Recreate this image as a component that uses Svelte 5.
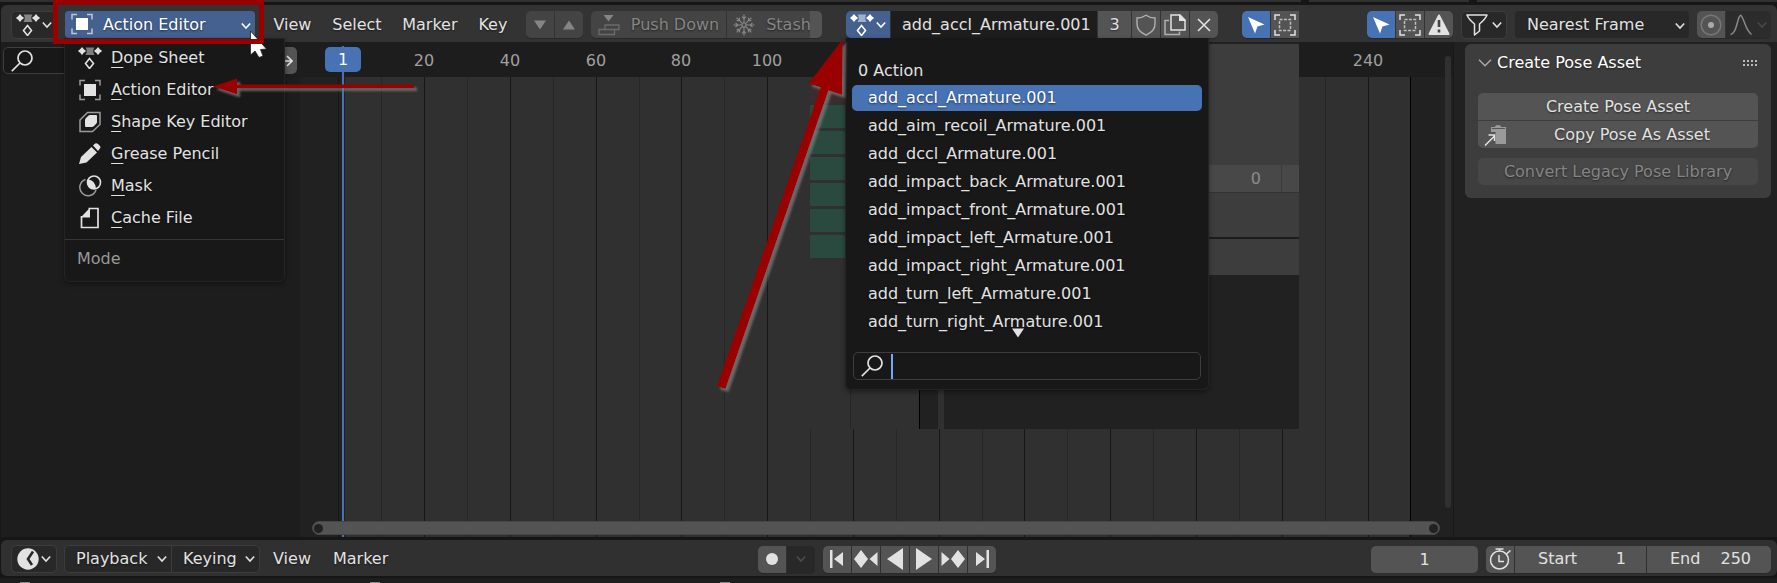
<script>
  const modes = [
    { icon: 'dope', label: 'Dope Sheet' },
    { icon: 'action', label: 'Action Editor' },
    { icon: 'shape', label: 'Shape Key Editor' },
    { icon: 'pencil', label: 'Grease Pencil' },
    { icon: 'mask', label: 'Mask' },
    { icon: 'file', label: 'Cache File' }
  ];
  const actions = [
    'add_accl_Armature.001',
    'add_aim_recoil_Armature.001',
    'add_dccl_Armature.001',
    'add_impact_back_Armature.001',
    'add_impact_front_Armature.001',
    'add_impact_left_Armature.001',
    'add_impact_right_Armature.001',
    'add_turn_left_Armature.001',
    'add_turn_right_Armature.001'
  ];
  const transport = [
    ['first', 'Jump to start'],
    ['prevkey', 'Previous keyframe'],
    ['back', 'Play reversed'],
    ['play', 'Play'],
    ['nextkey', 'Next keyframe'],
    ['last', 'Jump to end']
  ];
  // Horizontal place of a frame inside the canvas, in pixels.
  const frameX = (f) => Math.round(38.4 + f * 4.288);
  const ticks = Array.from({ length: 25 }, (_, i) => (i + 1) * 10);
  // Frames 120 to 220 lie behind the action list.
  const labels = ticks.filter((f) => f % 20 === 0 && (f <= 100 || f > 220));
  let selected = $state(0);
</script>

{#snippet icon(name)}
  {#if name === 'dope'}
    <svg width="24" height="22" viewBox="0 0 24 22" fill="currentColor">
      <path d="M7.5 .5h9q-2.500 3.500 0 7.500h-9q2.500-4 0-7.500z" opacity=".5" />
      <path d="M4 1q1 2 3 3-2 1-3 3-1-2-3-3 2-1 3-3z" stroke="currentColor" stroke-width="1.500" stroke-linejoin="round" />
      <path d="M20 1q1 2 3 3-2 1-3 3-1-2-3-3 2-1 3-3z" stroke="currentColor" stroke-width="1.500" stroke-linejoin="round" />
      <path d="M11.500 11.500l4 5-4 5-4-5z" fill="none" stroke="currentColor" stroke-width="1.600" />
    </svg>
  {:else if name === 'action'}
    <svg width="24" height="22" viewBox="0 0 24 22">
      <path d="M7 1.500H2V6.500M17 1.500h5V6.500M7 20.500H2V15.500M17 20.500h5V15.500" fill="none" stroke="currentColor" stroke-width="1.500" opacity=".65" />
      <path d="M6 5h12v12H6z" fill="currentColor" />
    </svg>
  {:else if name === 'shape'}
    <svg width="24" height="22" viewBox="0 0 24 22">
      <path d="M2 9l7.500-7.500H22v12L14.500 20.500H2z" fill="none" stroke="currentColor" stroke-width="1.500" opacity=".65" />
      <path d="M7 9q0-1 1-2l2-2q1-1 2-1h6q1 0 1 1v6q0 1-1 2l-2 2q-1 1-2 1H8q-1 0-1-1z" fill="currentColor" />
    </svg>
  {:else if name === 'pencil'}
    <svg width="24" height="22" viewBox="0 0 24 22" fill="currentColor">
      <path d="M1 21l2-7L13.500 4l5.500 5.500L8.500 19.500z" />
      <path d="M15 2.500l1.500-1.500q1.500-1.500 3.500 0l2 2q1 1.500-.5 3L20 8z" />
    </svg>
  {:else if name === 'mask'}
    <svg width="24" height="22" viewBox="0 0 24 22">
      <path d="M7.500 4.500A8.300 8.300 0 1 0 18 15" fill="none" stroke="currentColor" stroke-width="1.500" opacity=".65" />
      <circle cx="16" cy="7.500" r="6.500" fill="none" stroke="currentColor" stroke-width="1.600" />
      <path d="M10 4.500q7 .5 8 9-4 1.500-6.500-1T10 4.500z" fill="currentColor" />
    </svg>
  {:else if name === 'file'}
    <svg width="24" height="22" viewBox="0 0 24 22">
      <path d="M3.500 9v11.500h16.500V1.500H10.500" fill="none" stroke="currentColor" stroke-width="1.700" />
      <path d="M2.700 10.500L12 .7v9.800z" fill="currentColor" />
    </svg>
  {:else if name === 'chevron'}
    <svg width="10" height="8" viewBox="0 0 10 8" fill="none" stroke="currentColor" stroke-width="1.600"><path d="M.8 1.500L5 6l4.200-4.500" /></svg>
  {:else if name === 'search'}
    <svg width="22" height="22" viewBox="0 0 22 22" fill="none" stroke="currentColor" stroke-width="1.700"><circle cx="14" cy="8" r="7" /><path d="M9 13L.8 21.200" /></svg>
  {:else if name === 'down'}
    <svg width="12" height="10" viewBox="0 0 12 10" fill="currentColor"><path d="M0 .5h12L6 9.500z" /></svg>
  {:else if name === 'up'}
    <svg width="12" height="10" viewBox="0 0 12 10" fill="currentColor"><path d="M0 9.500h12L6 .5z" /></svg>
  {:else if name === 'push'}
    <svg width="22" height="22" viewBox="0 0 22 22" fill="none" stroke="currentColor" stroke-width="1.300">
      <path d="M5.500 1h10l-5 6.500z" fill="currentColor" stroke="none" />
      <path d="M7 11h14v4.500H7zM1 15.500h15.500v5H1z" opacity=".6" />
    </svg>
  {:else if name === 'snow'}
    <svg width="22" height="22" viewBox="0 0 22 22" fill="none" stroke="currentColor" stroke-width="1.200">
      {#each [0, 45, 90, 135, 180, 225, 270, 315] as a}
        <path d="M11 9V.5M9 2.500L11 5l2-2.500" transform="rotate({a} 11 11)" />
      {/each}
      <circle cx="11" cy="11" r="2" />
    </svg>
  {:else if name === 'shield'}
    <svg width="22" height="22" viewBox="0 0 22 22" fill="none" stroke="currentColor" stroke-width="1.400" opacity=".65"><path d="M11 1.200q4 2.800 9 2.800v6q0 7-9 11.200Q2 17 2 10V4q5 0 9-2.800z" /></svg>
  {:else if name === 'copy'}
    <svg width="22" height="22" viewBox="0 0 22 22" fill="none" stroke="currentColor" stroke-width="1.500">
      <path d="M5 6.500H1v14h14.500v-3" opacity=".65" />
      <path d="M7 1h9l5 5v10H7z" /><path d="M15 0l7 7h-7z" fill="currentColor" stroke="none" />
    </svg>
  {:else if name === 'close'}
    <svg width="14" height="14" viewBox="0 0 14 14" fill="none" stroke="currentColor" stroke-width="1.600"><path d="M1 1l12 12M13 1L1 13" /></svg>
  {:else if name === 'pointer'}
    <svg width="18" height="18" viewBox="0 0 18 18" fill="currentColor"><path d="M1 1l16.500 7.500-7 2-2.500 7z" /></svg>
  {:else if name === 'select'}
    <svg width="22" height="22" viewBox="0 0 22 22" fill="none" stroke="currentColor" stroke-width="1.500">
      <path d="M6 1H1v5M16 1h5v5M6 21H1v-5M16 21h5v-5" />
      <path d="M5.500 5.500h11v11h-11z" stroke-dasharray="3 1.400" opacity=".75" />
    </svg>
  {:else if name === 'warn'}
    <svg width="22" height="22" viewBox="0 0 22 22"><path d="M11 1.500l9.500 18.500h-19z" fill="currentColor" stroke="currentColor" stroke-width="2" stroke-linejoin="round" /><path d="M11 6v7M11 15.500v3" stroke="#444" stroke-width="2.600" /></svg>
  {:else if name === 'filter'}
    <svg width="22" height="22" viewBox="0 0 22 22" fill="none" stroke="currentColor" stroke-width="1.500" stroke-linejoin="round"><path d="M1 1h20q-1.500 4-7.500 9v7L8.500 21V10Q2.500 5 1 1z" /></svg>
  {:else if name === 'prop'}
    <svg width="22" height="22" viewBox="0 0 22 22"><circle cx="11" cy="11" r="9.800" fill="none" stroke="#777" stroke-width="1.500" /><circle cx="11" cy="11" r="3" fill="#aaa" /></svg>
  {:else if name === 'falloff'}
    <svg width="22" height="22" viewBox="0 0 22 22" fill="none" stroke="currentColor" stroke-width="1.500"><path d="M.5 20.500Q4.500 20 7 10T11 1.500 15 10t6.500 10.500" /></svg>
  {:else if name === 'asset'}
    <svg width="22" height="22" viewBox="0 0 22 22"><path d="M7 3h4q0-2 3-2t3 2h5v17H11.500V8H7z" fill="#9a9a9a" /><path d="M8 4.500h13" stroke="#555" /><path d="M1 21.500l9-9M4.500 11H10.500v6" fill="none" stroke="currentColor" stroke-width="1.500" /></svg>
  {:else if name === 'clock'}
    <svg width="22" height="22" viewBox="0 0 22 22"><circle cx="11" cy="11" r="10.700" fill="currentColor" /><path d="M16 3.500L11 11l4 6" fill="none" stroke="#282828" stroke-width="2.600" /></svg>
  {:else if name === 'watch'}
    <svg width="22" height="22" viewBox="0 0 22 22" fill="none" stroke="currentColor" stroke-width="1.500"><circle cx="10.500" cy="12" r="9" /><path d="M10 7v6.500h5M6.500 1h8M10.500 1v2M17.500 6l4-3.500" /></svg>
  {:else if name === 'dot'}
    <svg width="14" height="14" viewBox="0 0 14 14"><circle cx="7" cy="7" r="6" fill="currentColor" /></svg>
  {:else if name === 'expand'}
    <svg width="20" height="12" viewBox="0 0 20 12" fill="none" stroke="currentColor" stroke-width="1.600"><path d="M1 6h18M6 1L1 6l5 5M14 1l5 5-5 5" /></svg>
  {:else}
    <svg width="24" height="22" viewBox="0 0 24 22" fill="currentColor">
      {#if name === 'first'}<path d="M5 2h2.500v18H5zM18 4v14l-9-7z" />
      {:else if name === 'prevkey'}<path d="M0 11l7-9 7 9-7 9zM23.500 4v14l-8-7z" />
      {:else if name === 'back'}<path d="M20 0v22L4 11z" />
      {:else if name === 'play'}<path d="M4 0v22l16-11z" />
      {:else if name === 'nextkey'}<path d="M.5 4v14l8-7zM10 11l7-9 7 9-7 9z" />
      {:else}<path d="M16.500 2H19v18h-2.500zM6 4v14l9-7z" />{/if}
    </svg>
  {/if}
{/snippet}

<div class="app">
  <div class="area-above"><span></span><span></span></div>

  <header class="bar">
    <button class="box editor" aria-label="Editor type">{@render icon('dope')}{@render icon('chevron')}</button>
    <div class="mode">
      <span class="lead">{@render icon('action')}</span>
      <select aria-label="Mode"><option>Action Editor</option></select>
      <span class="tail">{@render icon('chevron')}</span>
    </div>
    <nav class="menus wide">
      <button>View</button><button>Select</button><button>Marker</button><button>Key</button>
    </nav>
    <div class="group off">
      <button class="sq" disabled aria-label="Move down">{@render icon('down')}</button>
      <button class="sq" disabled aria-label="Move up">{@render icon('up')}</button>
    </div>
    <div class="group off">
      <button class="push" disabled>{@render icon('push')}Push Down</button>
      <button class="stash" disabled>{@render icon('snow')}Stash</button>
      <span class="stub"></span>
    </div>
    <div class="group datablock">
      <button class="browse" aria-label="Browse action">{@render icon('dope')}{@render icon('chevron')}</button>
      <input class="name" aria-label="Action name" value="add_accl_Armature.001" />
      <button class="users">3</button>
      <button class="sq" aria-label="Fake user">{@render icon('shield')}</button>
      <button class="sq" aria-label="New action">{@render icon('copy')}</button>
      <button class="sq" aria-label="Unlink">{@render icon('close')}</button>
    </div>
    <div class="group cut">
      <button class="sq on" aria-label="Only selected">{@render icon('pointer')}</button>
      <button class="sq" aria-label="Show hidden">{@render icon('select')}</button>
    </div>
    <div class="right">
      <div class="group">
        <button class="sq on" aria-label="Only show selected">{@render icon('pointer')}</button>
        <button class="sq" aria-label="Include hidden">{@render icon('select')}</button>
        <button class="sq" aria-label="Only errors">{@render icon('warn')}</button>
      </div>
      <button class="box filter" aria-label="Filters">{@render icon('filter')}{@render icon('chevron')}</button>
      <div class="snap">
        <select aria-label="Snap"><option>Nearest Frame</option></select>
        <span class="tail">{@render icon('chevron')}</span>
      </div>
      <div class="group">
        <button class="sq" aria-label="Proportional editing">{@render icon('prop')}</button>
        <button class="falloff" aria-label="Falloff">{@render icon('falloff')}{@render icon('chevron')}</button>
      </div>
    </div>
  </header>

  <main>
    <aside class="channels">
      <div class="find">
        <label class="search">{@render icon('search')}<input aria-label="Filter channels" /></label>
        <button class="swap" aria-label="Invert">{@render icon('expand')}</button>
      </div>
    </aside>

    <section class="canvas">
      <div class="ruler">
        {#each labels as f}<span style="left:{frameX(f)}px">{f}</span>{/each}
      </div>
      <div class="graph">
        <div class="range" style="left:{frameX(1) + 2}px;width:{frameX(250) - frameX(1) - 2}px"></div>
        <i class="tick" style="left:{frameX(0)}px"></i>
        {#each ticks as f}
          <i class="tick" class:minor={f % 20 !== 0} class:end={f === 250} style="left:{frameX(f)}px"></i>
        {/each}
      </div>
      <div class="ghost">
        <div class="g-keys">
          <div class="g-ruler"></div>
          <div class="g-rows"><b class="red"></b><b></b><b></b><b></b><b></b><b></b><b></b></div>
          <i></i>
        </div>
        <div class="g-gap"></div>
        <div class="g-panel">
          <div class="g-top"></div>
          <div class="g-num"><span>0</span><em></em></div>
          <div class="g-a"></div>
          <div class="g-b"></div>
        </div>
      </div>
      <div class="playhead" style="left:{frameX(1)}px"><span>1</span></div>
      <div class="vscroll"></div>
      <div class="hscroll"><i></i><i></i></div>
    </section>

    <aside class="sidebar">
      <div class="panel">
        <h2>
          <svg width="14" height="8" viewBox="0 0 14 8" fill="none" stroke="currentColor" stroke-width="1.500"><path d="M1 .8l6 6 6-6" /></svg>
          Create Pose Asset
          <span class="grip"></span>
        </h2>
        <div class="stack">
          <button>Create Pose Asset</button>
          <button class="withicon">{@render icon('asset')}<span>Copy Pose As Asset</span></button>
        </div>
        <button class="legacy" disabled>Convert Legacy Pose Library</button>
      </div>
    </aside>
  </main>

  <footer class="bar timeline">
    <button class="box editor" aria-label="Timeline editor">{@render icon('clock')}{@render icon('chevron')}</button>
    <div class="boxes">
      <button class="playback">Playback{@render icon('chevron')}</button>
      <button class="keying">Keying{@render icon('chevron')}</button>
    </div>
    <nav class="menus"><button>View</button><button>Marker</button></nav>
    <div class="center">
      <div class="group">
        <button class="sq" aria-label="Auto keying">{@render icon('dot')}</button>
        <button class="sq dim" aria-label="Keying options">{@render icon('chevron')}</button>
      </div>
      <div class="group">
        {#each transport as [name, label]}
          <button class="sq" aria-label={label}>{@render icon(name)}</button>
        {/each}
      </div>
    </div>
    <div class="right">
      <input class="current" aria-label="Current frame" value="1" />
      <div class="group">
        <button class="sq" aria-label="Use preview range">{@render icon('watch')}</button>
        <label class="num start">Start<input value="1" /></label>
        <label class="num stop">End<input value="250" /></label>
      </div>
    </div>
  </footer>
  <div class="status"><i></i><i></i><i></i></div>

  <div class="popup modes">
    {#each modes as m}
      <button>{@render icon(m.icon)}<span><u>{m.label[0]}</u>{m.label.slice(1)}</span></button>
    {/each}
    <p>Mode</p>
  </div>

  <div class="popup actions">
    <p>0 Action</p>
    {#each actions as a, i}
      <button class:sel={i === selected} onclick={() => (selected = i)}>{a}</button>
    {/each}
    <span class="more">{@render icon('down')}</span>
    <label class="search">{@render icon('search')}<i class="caret"></i><input aria-label="Search actions" /></label>
  </div>

  <svg class="notes" width="900" height="400" viewBox="0 0 900 400">
    <defs>
      <filter id="soft" x="-20%" y="-20%" width="140%" height="140%">
        <feDropShadow dx="3" dy="3" stdDeviation="1.200" flood-color="#7c7c7c" flood-opacity=".75" />
      </filter>
    </defs>
    <path d="M250.500 31v24l4.500-4 4 6.500 4-1.500-2.500-6.500 6-.5z" fill="#fff" stroke="#222" stroke-width=".8" />
    <path d="M55.500 2.500h206v39h-206z" fill="none" stroke="#900" stroke-width="5" />
    <path d="M213 86.500l24-8v6h177v3.500H237v6.500z" fill="#900" filter="url(#soft)" />
    <path d="M843 39l-1 56-13.500-4.500L725.500 389l-8.500-2.500L820.500 87.500 808.500 83.500z" fill="#900" filter="url(#soft)" />
  </svg>
</div>

<style>
  :global(body) { background: #161616; overflow: hidden; }
  .app, .app * { box-sizing: border-box; }
  .app {
    position: relative; display: flex; flex-direction: column; min-height: 100vh;
    font: 16px/20px "DejaVu Sans", sans-serif; color: #e2e2e2; background: #161616;
  }
  svg { display: block; flex: none; }
  button, input, select { font: inherit; color: inherit; border: 0; margin: 0; padding: 0; background: none; outline: none; min-width: 0; }
  button { display: flex; align-items: center; justify-content: center; white-space: nowrap; text-shadow: 0 1px 2px #0008; }
  select { appearance: none; width: 100%; height: 100%; text-shadow: 0 1px 2px #0008; }
  h2, p { margin: 0; font: inherit; }

  .area-above { height: 2px; margin-bottom: 3px; background: #303030; display: flex; justify-content: flex-end; gap: 160px; padding-right: 300px; }
  .area-above span { width: 8px; background: #161616; }
  .bar { display: flex; align-items: center; height: 37px; padding: 2px 6px 0 10px; margin-left: 1px; background: #333; border-radius: 6px 6px 0 0; gap: 8px; }
  .box, .boxes { height: 28px; border: 1px solid #3d3d3d; border-radius: 5px; background: #282828; flex: none; }
  .editor { width: 46px; gap: 2px; }
  .filter { width: 46px; gap: 4px; }
  .mode, .snap { position: relative; height: 27px; border-radius: 4px; flex: none; }
  .mode { width: 190px; background: #44618f; color: #fff; }
  .mode select { padding-left: 38px; }
  .lead { position: absolute; left: 5px; top: 2px; }
  .tail { position: absolute; right: 4px; top: 11px; pointer-events: none; }
  .snap { width: 174px; background: #282828; }
  .snap select { padding-left: 12px; }
  .menus { display: flex; height: 27px; }
  .menus.wide { width: 255px; }
  .menus button { padding: 0 11px; }
  .group { display: flex; gap: 1px; height: 27px; border-radius: 5px; overflow: hidden; flex: none; box-shadow: 0 1px 0 #282828; }
  .group button { background: #545454; }
  .group .sq { width: 28px; }
  .group .on { background: #4772b3; color: #fff; }
  .off button { background: #444; color: #858585; }
  .group .push { width: 135px; gap: 11px; }
  .group .stash { width: 83px; gap: 11px; padding-left: 7px; }
  .stub { width: 12px; margin-left: -1px; background: #545454; }
  .datablock { margin: 0 16px; }
  .group .browse { width: 44px; gap: 2px; background: #44618f; color: #fff; }
  .name { width: 206px; padding-left: 11px; background: #1d1d1d; }
  .group .users { width: 33px; }
  .cut { border-radius: 5px 0 0 5px; }
  .right { display: flex; gap: 8px; margin-left: auto; align-items: center; }
  .group .falloff { width: 45px; gap: 5px; background: #2c2c2c; color: #888; }
  .falloff :global(svg:last-child) { opacity: .3; }

  main { display: flex; flex: 1; margin-left: 1px; background: #212121; }
  .channels { width: 299px; flex: none; background: #1d1d1d; padding: 5px 3px 0 2px; border-radius: 0 0 0 5px; }
  .find { display: flex; gap: 8px; }
  .search { display: flex; align-items: center; gap: 8px; flex: 1; height: 27px; padding-left: 7px; border: 1px solid #3d3d3d; border-radius: 5px; background: #181818; }
  .search input { flex: 1; }
  .swap { width: 28px; height: 27px; border-radius: 5px; background: #545454; }
  .canvas { position: relative; display: flex; flex-direction: column; flex: 1; overflow: hidden; border-right: 1px solid #181818; }
  .ruler { position: relative; height: 35px; background: #1d1d1d; color: #a0a0a0; }
  .ruler span { position: absolute; top: 9px; transform: translateX(-50%); }
  .graph { position: relative; flex: 1; }
  .range { position: absolute; top: 0; bottom: 0; background: #303030; }
  .tick { position: absolute; top: 0; bottom: 0; width: 1px; background: #161616; }
  .minor { background: #262626; }
  .end { background: #000; }
  .playhead { position: absolute; top: 4px; bottom: 0; width: 2px; background: #4772b3; margin-left: -1px; box-shadow: 0 0 0 1px #2228; }
  .playhead span { position: absolute; top: 1px; left: -17px; width: 36px; height: 25px; line-height: 26px; text-align: center; border-radius: 5px; background: #4772b3; color: #fff; }
  .vscroll { position: absolute; right: 2px; top: 14px; bottom: 29px; width: 6px; border-radius: 3px; background: #303030; }
  .hscroll { position: absolute; left: 12px; right: 13px; bottom: 2px; height: 14px; border-radius: 7px; background: #545454; border: 1px solid #464646; display: flex; justify-content: space-between; align-items: center; padding: 0 1px; }
  .hscroll i { width: 9px; height: 9px; border-radius: 50%; background: #212121; }

  .ghost { position: absolute; left: 510px; top: 0; width: 489px; height: 387px; display: flex; background: #212121; }
  .g-keys { position: relative; width: 110px; background: #303030; border-right: 1px solid #000; }
  .g-keys > i { position: absolute; left: 40px; bottom: 0; width: 1px; height: 180px; background: #262626; }
  .g-ruler { height: 35px; background: #1d1d1d; margin-bottom: 11px; }
  .g-rows { display: flex; flex-direction: column; gap: 3px; }
  .g-rows b { height: 23px; background: #2a4a40; }
  .g-rows .red { height: 14px; background: #3c2c2d; }
  .g-gap { width: 6px; margin: 0 18px; background: #303030; }
  .g-panel { flex: 1; padding-top: 2px; }
  .g-top { height: 121px; background: #3d3d3d; }
  .g-num { display: flex; justify-content: flex-end; height: 28px; background: #484848; border-bottom: 1px solid #333; line-height: 27px; color: #8c8c8c; }
  .g-num em { width: 18px; margin-left: 20px; border-left: 1px solid #3a3a3a; }
  .g-a { height: 44px; background: #3d3d3d; border-top: 1px solid #3d3d3d; }
  .g-b { height: 38px; background: #3d3d3d; border-top: 2px solid #1d1d1d; }

  .sidebar { width: 323px; flex: none; padding: 2px 6px 0 11px; }
  .panel { padding: 9px 13px 13px; border-radius: 6px; background: #3d3d3d; }
  h2 { display: flex; align-items: center; height: 20px; gap: 5px; color: #fff; margin-bottom: 20px; text-shadow: 0 1px 2px #0008; }
  h2 svg { color: #aaa; }
  .grip { width: 16px; height: 8px; margin-left: auto; background: radial-gradient(circle, #bbb 1px, transparent 1px) 0 0 / 4px 4px; }
  .stack { display: flex; flex-direction: column; gap: 1px; border-radius: 5px; overflow: hidden; margin-bottom: 10px; }
  .stack button { height: 27px; background: #545454; }
  .withicon { padding-left: 6px; }
  .withicon span { flex: 1; }
  .legacy { width: 100%; height: 27px; border-radius: 5px; background: #474747; color: #858585; }

  .timeline { position: relative; height: 36px; margin: 3px 0 2px 1px; background: #303030; border-radius: 6px; }
  .boxes { display: flex; width: 196px; margin-left: -1px; }
  .boxes button { justify-content: space-between; padding: 0 4px 0 11px; }
  .playback { width: 107px; border-right: 1px solid #3d3d3d; }
  .keying { flex: 1; }
  .timeline .menus { margin-left: -6px; }
  .center { position: absolute; left: 0; right: 25px; display: flex; justify-content: center; gap: 8px; pointer-events: none; }
  .group .dim { background: #282828; color: #4c4c4c; }
  .current { width: 107px; height: 27px; border-radius: 5px; background: #545454; text-align: center; }
  .num { display: flex; align-items: center; background: #545454; padding: 0 20px 0 23px; }
  .num input { flex: 1; width: 0; text-align: right; }
  .start { width: 131px; }
  .stop { width: 124px; }
  .status { height: 5px; background: #1d1d1d; display: flex; align-items: flex-end; padding-left: 20px; gap: 340px; }
  .status i { width: 10px; height: 1px; background: #888; }

  .popup { position: absolute; top: 38px; background: #181818; border: 1px solid #242424; border-radius: 0 0 6px 6px; box-shadow: 0 2px 5px #0006; }
  .modes { left: 64px; width: 221px; padding-top: 3px; }
  .modes button { width: 100%; height: 32px; justify-content: flex-start; padding-left: 13px; gap: 9px; }
  .modes u { text-decoration-thickness: 1px; text-underline-offset: 4px; }
  .modes p { margin-top: 5px; padding: 9px 12px 12px; color: #999; border-top: 1px solid #363636; }
  .actions { left: 845px; width: 364px; padding: 22px 6px 9px; border-top-color: #181818; }
  .actions p { padding-left: 6px; margin-bottom: 4px; }
  .actions button { width: 350px; height: 26px; margin-bottom: 2px; padding-left: 16px; justify-content: flex-start; border-radius: 5px; }
  .actions .sel { background: #4772b3; color: #fff; }
  .more { display: flex; justify-content: center; height: 16px; margin: -9px 0 8px; padding-right: 18px; }
  .caret { width: 2px; height: 25px; background: #71a8ff; }
  .actions .search { width: 348px; height: 28px; margin-left: 1px; }
  .notes { position: absolute; left: 0; top: 0; pointer-events: none; }
</style>
